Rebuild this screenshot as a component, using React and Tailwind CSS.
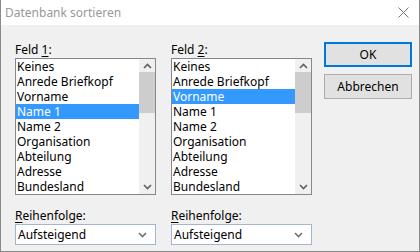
const felder = [
  'Keines',
  'Anrede Briefkopf',
  'Vorname',
  'Name 1',
  'Name 2',
  'Organisation',
  'Abteilung',
  'Adresse',
  'Bundesland',
]

const Chevron = ({ up = false, className = '' }) => (
  <svg width="9" height="6" viewBox="0 0 9 6" className={className}>
    <path
      d={up ? 'M1 5 L4.5 1.5 L8 5' : 'M1 1 L4.5 4.5 L8 1'}
      fill="none"
      stroke="currentColor"
      strokeWidth="1.6"
    />
  </svg>
)

const ListBox = ({ selected }) => (
  <div className="flex h-[137px] w-full border border-[#828790] bg-white">
    <ul className="flex-1 overflow-hidden">
      {felder.map((f) => (
        <li
          key={f}
          className={`h-[15px] pl-[1px] leading-[15px] whitespace-nowrap ${
            f === selected ? 'bg-[#3399ff] text-white' : 'text-black'
          }`}
        >
          {f}
        </li>
      ))}
    </ul>
    <div className="flex w-[16px] flex-col bg-[#f0f0f0]">
      <div className="flex h-[13px] items-center justify-center text-[#606060]">
        <Chevron up />
      </div>
      <div className="h-[41px] bg-[#cdcdcd]" />
      <div className="flex-1" />
      <div className="flex h-[15px] items-center justify-center text-[#606060]">
        <Chevron />
      </div>
    </div>
  </div>
)

const Combo = () => (
  <div className="flex h-[21px] w-full items-center justify-between border border-[#a6b5cf] bg-white pl-[2px] pr-[8px]">
    <span>Aufsteigend</span>
    <Chevron className="text-[#707070]" />
  </div>
)

const Spalte = ({ nr, selected }) => (
  <div className="flex w-[141px] flex-col">
    <label className="h-[16px] leading-[16px]">
      Feld <span className="underline underline-offset-2">{nr}</span>:
    </label>
    <ListBox selected={selected} />
    <label className="mt-[13px] h-[16px] leading-[16px]">
      <span className="underline underline-offset-2">R</span>eihenfolge:
    </label>
    <Combo />
  </div>
)

export default function App() {
  return (
    <div className="flex h-[252px] w-[420px] flex-col text-[12px] font-['Noto_Sans',sans-serif]">
      <div className="flex h-[252px] flex-col border-x border-b border-[#8a8a8a] bg-[#f0f0f0]">
        <div className="flex h-[25px] items-center justify-between bg-white pl-[4px] pr-[10px]">
          <span className="text-[#999999]">Datenbank sortieren</span>
          <svg width="11" height="11" viewBox="0 0 11 11">
            <path d="M0.5 0.5 L10.5 10.5 M10.5 0.5 L0.5 10.5" stroke="#777" strokeWidth="1" />
          </svg>
        </div>
        <div className="flex pl-[14px] pt-[17px]">
          <Spalte nr="1" selected="Name 1" />
          <div className="ml-[15px]">
            <Spalte nr="2" selected="Vorname" />
          </div>
          <div className="ml-[12px] flex flex-col gap-[7px]">
            <button className="h-[25px] w-[88px] border-2 border-[#0078d7] bg-[#e1e1e1]">OK</button>
            <button className="h-[25px] w-[88px] border border-[#adadad] bg-[#e1e1e1]">Abbrechen</button>
          </div>
        </div>
      </div>
    </div>
  )
}
